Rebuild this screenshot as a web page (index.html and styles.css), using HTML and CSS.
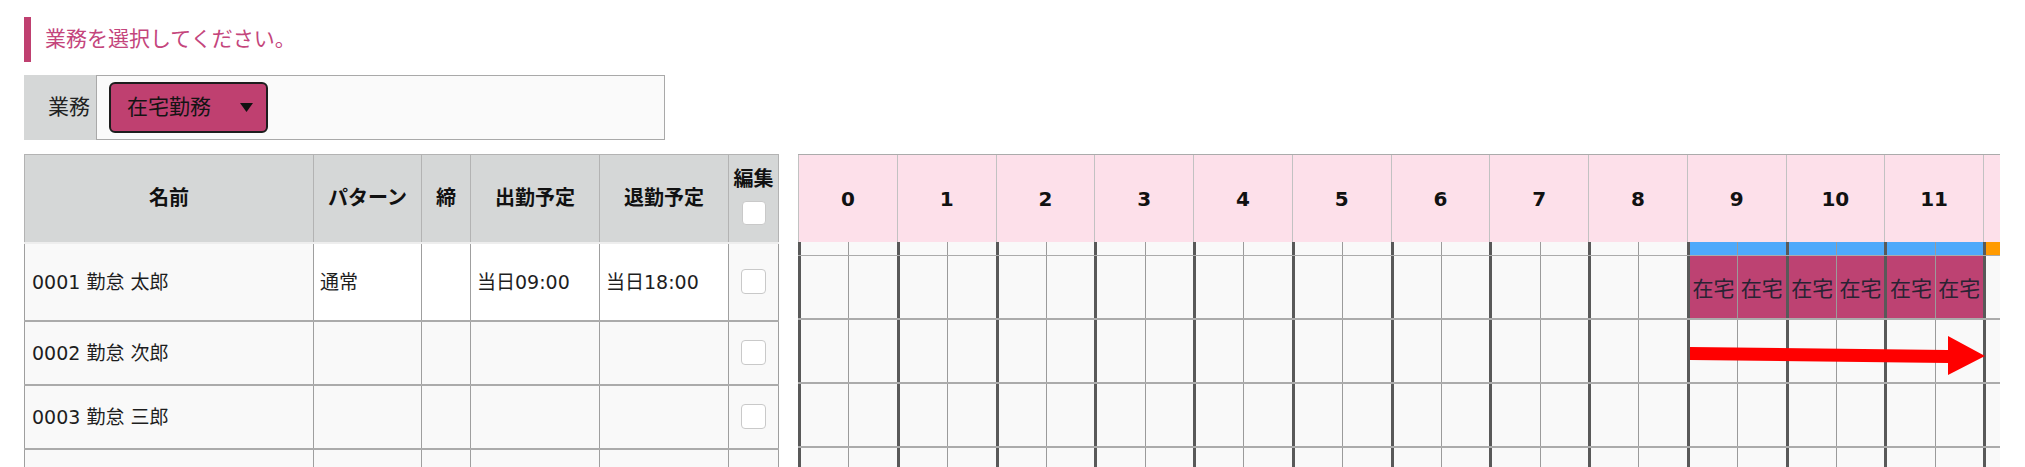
FILE: index.html
```html
<!DOCTYPE html>
<html lang="ja">
<head>
<meta charset="utf-8">
<title>業務選択</title>
<link rel="stylesheet" href="styles.css">
</head>
<body>
<div class="page">
  <h2 class="title">業務を選択してください。</h2>

  <div class="filter">
    <div class="filter-label">業務</div>
    <div class="filter-field">
      <button class="select" type="button">
        <span>在宅勤務</span>
        <svg class="caret" width="13" height="9" viewBox="0 0 13 9"><polygon points="0,0 13,0 6.5,9" fill="#111"/></svg>
      </button>
    </div>
  </div>

  <div class="board">
    <table class="staff">
      <colgroup>
        <col class="c-name"><col class="c-pat"><col class="c-close"><col class="c-in"><col class="c-out"><col class="c-edit">
      </colgroup>
      <thead>
        <tr>
          <th>名前</th>
          <th>パターン</th>
          <th>締</th>
          <th>出勤予定</th>
          <th>退勤予定</th>
          <th class="edit-head"><div>編集</div><input class="chk chk-head" type="checkbox"></th>
        </tr>
      </thead>
      <tbody>
        <tr class="first">
          <td>0001 勤怠 太郎</td>
          <td class="white">通常</td>
          <td class="white"></td>
          <td class="white">当日09:00</td>
          <td class="white">当日18:00</td>
          <td class="edit"><input class="chk" type="checkbox"></td>
        </tr>
        <tr>
          <td>0002 勤怠 次郎</td>
          <td></td><td></td><td></td><td></td>
          <td class="edit"><input class="chk" type="checkbox"></td>
        </tr>
        <tr>
          <td>0003 勤怠 三郎</td>
          <td></td><td></td><td></td><td></td>
          <td class="edit"><input class="chk" type="checkbox"></td>
        </tr>
        <tr>
          <td></td>
          <td></td><td></td><td></td><td></td>
          <td class="edit"><input class="chk" type="checkbox"></td>
        </tr>
      </tbody>
    </table>

    <div class="timeline">
      <div class="tl-head">
        <div class="hour">0</div><div class="hour">1</div><div class="hour">2</div><div class="hour">3</div>
        <div class="hour">4</div><div class="hour">5</div><div class="hour">6</div><div class="hour">7</div>
        <div class="hour">8</div><div class="hour">9</div><div class="hour">10</div><div class="hour">11</div>
        <div class="hour">12</div>
      </div>

      <div class="tl-row strip">
        <div class="slot"><span class="half"></span><span class="half"></span></div>
        <div class="slot"><span class="half"></span><span class="half"></span></div>
        <div class="slot"><span class="half"></span><span class="half"></span></div>
        <div class="slot"><span class="half"></span><span class="half"></span></div>
        <div class="slot"><span class="half"></span><span class="half"></span></div>
        <div class="slot"><span class="half"></span><span class="half"></span></div>
        <div class="slot"><span class="half"></span><span class="half"></span></div>
        <div class="slot"><span class="half"></span><span class="half"></span></div>
        <div class="slot"><span class="half"></span><span class="half"></span></div>
        <div class="slot"><span class="half plan"></span><span class="half plan"></span></div>
        <div class="slot"><span class="half plan"></span><span class="half plan"></span></div>
        <div class="slot"><span class="half plan"></span><span class="half plan"></span></div>
        <div class="slot"><span class="half over"></span><span class="half over"></span></div>
      </div>

      <div class="tl-row">
        <div class="slot"><span class="half"></span><span class="half"></span></div>
        <div class="slot"><span class="half"></span><span class="half"></span></div>
        <div class="slot"><span class="half"></span><span class="half"></span></div>
        <div class="slot"><span class="half"></span><span class="half"></span></div>
        <div class="slot"><span class="half"></span><span class="half"></span></div>
        <div class="slot"><span class="half"></span><span class="half"></span></div>
        <div class="slot"><span class="half"></span><span class="half"></span></div>
        <div class="slot"><span class="half"></span><span class="half"></span></div>
        <div class="slot"><span class="half"></span><span class="half"></span></div>
        <div class="slot"><span class="half work">在宅</span><span class="half work">在宅</span></div>
        <div class="slot"><span class="half work">在宅</span><span class="half work">在宅</span></div>
        <div class="slot"><span class="half work">在宅</span><span class="half work">在宅</span></div>
        <div class="slot"><span class="half"></span><span class="half"></span></div>
      </div>

      <div class="tl-row">
        <div class="slot"><span class="half"></span><span class="half"></span></div>
        <div class="slot"><span class="half"></span><span class="half"></span></div>
        <div class="slot"><span class="half"></span><span class="half"></span></div>
        <div class="slot"><span class="half"></span><span class="half"></span></div>
        <div class="slot"><span class="half"></span><span class="half"></span></div>
        <div class="slot"><span class="half"></span><span class="half"></span></div>
        <div class="slot"><span class="half"></span><span class="half"></span></div>
        <div class="slot"><span class="half"></span><span class="half"></span></div>
        <div class="slot"><span class="half"></span><span class="half"></span></div>
        <div class="slot"><span class="half"></span><span class="half"></span></div>
        <div class="slot"><span class="half"></span><span class="half"></span></div>
        <div class="slot"><span class="half"></span><span class="half"></span></div>
        <div class="slot"><span class="half"></span><span class="half"></span></div>
      </div>

      <div class="tl-row">
        <div class="slot"><span class="half"></span><span class="half"></span></div>
        <div class="slot"><span class="half"></span><span class="half"></span></div>
        <div class="slot"><span class="half"></span><span class="half"></span></div>
        <div class="slot"><span class="half"></span><span class="half"></span></div>
        <div class="slot"><span class="half"></span><span class="half"></span></div>
        <div class="slot"><span class="half"></span><span class="half"></span></div>
        <div class="slot"><span class="half"></span><span class="half"></span></div>
        <div class="slot"><span class="half"></span><span class="half"></span></div>
        <div class="slot"><span class="half"></span><span class="half"></span></div>
        <div class="slot"><span class="half"></span><span class="half"></span></div>
        <div class="slot"><span class="half"></span><span class="half"></span></div>
        <div class="slot"><span class="half"></span><span class="half"></span></div>
        <div class="slot"><span class="half"></span><span class="half"></span></div>
      </div>

      <div class="tl-row">
        <div class="slot"><span class="half"></span><span class="half"></span></div>
        <div class="slot"><span class="half"></span><span class="half"></span></div>
        <div class="slot"><span class="half"></span><span class="half"></span></div>
        <div class="slot"><span class="half"></span><span class="half"></span></div>
        <div class="slot"><span class="half"></span><span class="half"></span></div>
        <div class="slot"><span class="half"></span><span class="half"></span></div>
        <div class="slot"><span class="half"></span><span class="half"></span></div>
        <div class="slot"><span class="half"></span><span class="half"></span></div>
        <div class="slot"><span class="half"></span><span class="half"></span></div>
        <div class="slot"><span class="half"></span><span class="half"></span></div>
        <div class="slot"><span class="half"></span><span class="half"></span></div>
        <div class="slot"><span class="half"></span><span class="half"></span></div>
        <div class="slot"><span class="half"></span><span class="half"></span></div>
      </div>

      <svg class="arrow" width="300" height="46" viewBox="0 0 300 46">
        <polygon points="2,14 260,17 260,3 297,23 260,42 260,30 2,27" fill="#ff0000"/>
      </svg>
    </div>
  </div>
</div>
</body>
</html>
```

FILE: styles.css
```css
* {
  box-sizing: border-box;
}

html,
body {
  margin: 0;
  padding: 0;
  background: #ffffff;
  overflow: hidden;
}

body {
  font-family: "DejaVu Sans", "Noto Sans CJK JP", sans-serif;
  color: #222222;
}

.page {
  padding: 17px 25px 0 24px;
}

/* heading */
.title {
  margin: 0;
  height: 45px;
  border-left: 7px solid #bf4070;
  padding-left: 14px;
  font-size: 21px;
  font-weight: 400;
  line-height: 45px;
  color: #c4457c;
}

/* filter row */
.filter {
  display: flex;
  margin-top: 13px;
  width: 641px;
  height: 65px;
}

.filter-label {
  width: 72px;
  background: #d5d7d7;
  display: flex;
  align-items: center;
  justify-content: flex-end;
  padding-right: 6px;
  font-size: 21px;
  line-height: 1;
  color: #222222;
}

.filter-field {
  flex: 1;
  border: 1px solid #a9a9a9;
  background: #fafafa;
  display: flex;
  align-items: center;
  padding-left: 12px;
}

.select {
  width: 159px;
  height: 51px;
  border: 2px solid #1d1d1d;
  border-radius: 6px;
  background: #bf4070;
  display: flex;
  align-items: center;
  justify-content: space-between;
  padding: 0 13px 0 16px;
  font-family: inherit;
  font-size: 21px;
  line-height: 1;
  color: #141414;
}

.caret {
  display: block;
}

/* board */
.board {
  display: flex;
  gap: 19px;
  margin-top: 14px;
  align-items: flex-start;
}

.staff {
  flex: none;
  width: 754px;
  table-layout: fixed;
  border-collapse: collapse;
  font-size: 19px;
}

.c-name { width: 289px; }
.c-pat { width: 108px; }
.c-close { width: 49px; }
.c-in { width: 129px; }
.c-out { width: 129px; }
.c-edit { width: 50px; }

.staff th {
  height: 88px;
  padding: 0;
  background: #d5d7d7;
  border: 1px solid #b3b3b3;
  border-bottom: 2px solid #eeeeee;
  font-size: 20px;
  font-weight: 700;
  line-height: 22px;
  color: #111111;
  white-space: nowrap;
}

.staff .edit-head div {
  margin-top: -4px;
}

.chk {
  -webkit-appearance: none;
  appearance: none;
  display: block;
  width: 25px;
  height: 25px;
  margin: 0 auto;
  background: #ffffff;
  border: 1px solid #c9c9c9;
  border-radius: 4px;
}

.chk-head {
  width: 24px;
  height: 24px;
  margin-top: 11px;
}

.staff td {
  height: 64px;
  padding: 0 7px;
  background: #f9f9f9;
  border-left: 1px solid #9f9f9f;
  border-right: 1px solid #9f9f9f;
  border-bottom: 2px solid #ababab;
  line-height: 22px;
  white-space: nowrap;
  color: #1e1e1e;
}

.staff tr.first td {
  height: 78px;
  border-top: 2px solid #eeeeee;
}

.staff td.white {
  background: #ffffff;
  padding-left: 6px;
}

.staff td.edit {
  padding: 0;
}

/* timeline */
.timeline {
  flex: 1;
  min-width: 0;
  position: relative;
  overflow: hidden;
  border-top: 1px solid #ababab;
  background: #f9f9f9;
}

.tl-head,
.tl-row {
  display: flex;
  width: max-content;
}

.tl-head {
  height: 87px;
}

.hour {
  flex: 0 0 98.75px;
  border-left: 1px solid #c2c2c2;
  background: #fde0ea;
  display: flex;
  align-items: center;
  justify-content: center;
  font-size: 20px;
  font-weight: 700;
  color: #111111;
}

.tl-row {
  height: 64px;
  border-bottom: 2px solid #ababab;
}

.tl-row.strip {
  height: 14px;
  border-bottom: 1px solid #ababab;
}

.slot {
  flex: 0 0 98.75px;
  display: flex;
  border-left: 3px solid #595959;
}

.half {
  flex: 1;
  min-width: 0;
}

.half:first-child {
  border-right: 1px solid #9b9b9b;
}

.half.plan {
  background: #4ea9fb;
}

.half.over {
  background: #ff9a00;
}

.half.work {
  background: #bd4272;
  display: flex;
  align-items: center;
  justify-content: center;
  overflow: hidden;
  white-space: nowrap;
  font-size: 21px;
  color: #2a2233;
}

.arrow {
  position: absolute;
  left: 890px;
  top: 178px;
}
```
